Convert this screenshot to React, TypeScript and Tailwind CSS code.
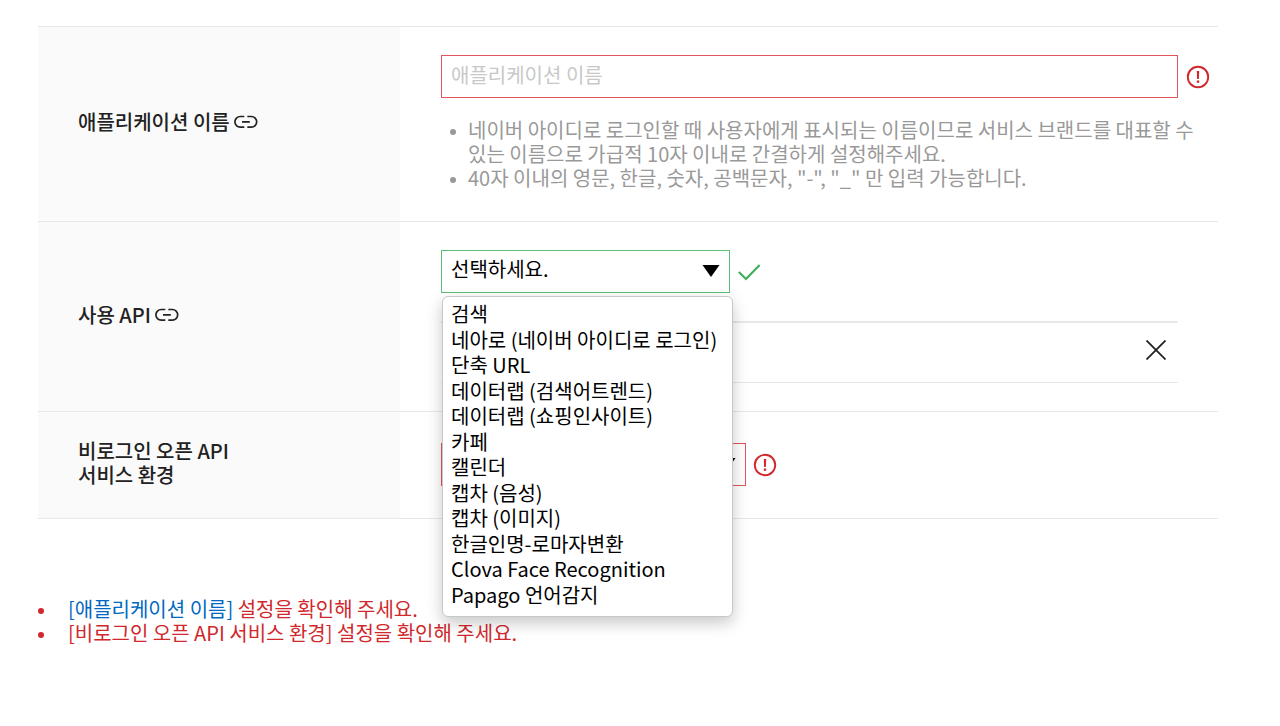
import type { ReactNode } from "react";

const apiOptions = [
  "검색",
  "네아로 (네이버 아이디로 로그인)",
  "단축 URL",
  "데이터랩 (검색어트렌드)",
  "데이터랩 (쇼핑인사이트)",
  "카페",
  "캘린더",
  "캡차 (음성)",
  "캡차 (이미지)",
  "한글인명-로마자변환",
  "Clova Face Recognition",
  "Papago 언어감지",
];

function LinkIcon() {
  return (
    <svg
      width="24"
      height="14"
      viewBox="0 0 24 14"
      fill="none"
      stroke="#222"
      strokeWidth="1.7"
      aria-hidden="true"
    >
      <path d="M10.3 1.5H6.2a5.3 5.3 0 0 0 0 10.6h4.1M13.3 1.5h4.1a5.3 5.3 0 0 1 0 10.6h-4.1M8 6.8h7.8" />
    </svg>
  );
}

function AlertIcon() {
  return (
    <svg width="24" height="24" viewBox="0 0 24 24" fill="none" className="shrink-0" aria-hidden="true">
      <circle cx="12" cy="12" r="10.2" stroke="#d0282c" strokeWidth="1.9" />
      <path d="M10.8 6h2.4l-.3 8h-1.8z" fill="#d0282c" />
      <rect x="10.8" y="15.5" width="2.4" height="2.3" fill="#d0282c" />
    </svg>
  );
}

function CheckIcon() {
  return (
    <svg width="24" height="24" viewBox="0 0 24 24" fill="none" className="shrink-0" aria-hidden="true">
      <path d="M0.8 12L8 19L21.6 5" stroke="#3fae5a" strokeWidth="2.2" />
    </svg>
  );
}

function ArrowIcon() {
  return (
    <svg
      width="18"
      height="12"
      viewBox="0 0 18 12"
      className="pointer-events-none absolute top-[15px] right-[10px]"
      aria-hidden="true"
    >
      <path d="M0.5 0h17L9 12z" fill="#000" />
    </svg>
  );
}

function FormRow({
  label,
  htmlFor,
  link,
  children,
}: {
  label: ReactNode;
  htmlFor: string;
  link?: boolean;
  children: ReactNode;
}) {
  return (
    <div className="flex border-b border-[#e8e8e8]">
      <div className="flex w-[362px] shrink-0 items-center gap-1 bg-[#fafafa] pb-1 pl-10 font-medium text-[#222]">
        <label htmlFor={htmlFor}>{label}</label>
        {link && (
          <a href="#guide" aria-label="가이드">
            <LinkIcon />
          </a>
        )}
      </div>
      <div className="min-w-0 flex-1 pt-7 pr-2 pl-[41px]">{children}</div>
    </div>
  );
}

export default function App() {
  return (
    <main className="bg-white pt-[26px] pr-[62px] pb-20 pl-[38px] font-['Noto_Sans_CJK_KR','Noto_Sans',sans-serif] text-xl leading-6 text-black">
      <form className="border-t border-[#e8e8e8]">
        <FormRow label="애플리케이션 이름" htmlFor="app-name" link>
          <div className="flex items-center gap-2">
            <input
              id="app-name"
              type="text"
              placeholder="애플리케이션 이름"
              className="h-[43px] min-w-0 flex-1 border border-[#e25558] px-[9px] pb-1 outline-none placeholder:text-[#c8c8c8]"
            />
            <AlertIcon />
          </div>
          <ul className="mt-5 mb-[31px] list-none text-[#999]">
            <li className="flex gap-3 pl-[9px]">
              <span className="mt-[11px] size-1.5 shrink-0 rounded-full bg-[#999]" />
              <span>
                네이버 아이디로 로그인할 때 사용자에게 표시되는 이름이므로 서비스 브랜드를 대표할 수
                <br />
                있는 이름으로 가급적 10자 이내로 간결하게 설정해주세요.
              </span>
            </li>
            <li className="flex gap-3 pl-[9px]">
              <span className="mt-[11px] size-1.5 shrink-0 rounded-full bg-[#999]" />
              <span>40자 이내의 영문, 한글, 숫자, 공백문자, "-", "_" 만 입력 가능합니다.</span>
            </li>
          </ul>
        </FormRow>

        <FormRow label="사용 API" htmlFor="use-api" link>
          <div className="flex items-center gap-2">
            <div className="relative w-[289px]">
              <select
                id="use-api"
                className="h-[43px] w-full appearance-none border border-[#5cbd75] bg-white px-[9px] pb-1.5 outline-none"
              >
                <option>선택하세요.</option>
              </select>
              <ArrowIcon />
              <ul
                role="listbox"
                aria-label="사용 API"
                className="absolute top-[46px] left-px z-10 flex h-[321px] w-[291px] flex-col rounded-md border border-[#c8c8c8] bg-white px-2 pt-[5px] pb-2 shadow-[0_6px_16px_rgba(0,0,0,0.22)]"
              >
                {apiOptions.map((name) => (
                  <li key={name} role="option" aria-selected={false} className="flex-1 whitespace-nowrap">
                    {name}
                  </li>
                ))}
              </ul>
            </div>
            <CheckIcon />
          </div>
          <div className="mt-7 mr-8 mb-7 flex h-[62px] items-center justify-end border-t-2 border-b border-[#e8e8e8] pr-3 pb-[5px]">
            <button type="button" aria-label="삭제">
              <svg width="20" height="20" viewBox="0 0 20 20" stroke="#222" strokeWidth="1.8" aria-hidden="true">
                <path d="M0.5 0.5l19 19M19.5 0.5l-19 19" />
              </svg>
            </button>
          </div>
        </FormRow>

        <FormRow
          label={
            <>
              비로그인 오픈 API
              <br />
              서비스 환경
            </>
          }
          htmlFor="service-env"
        >
          <div className="mt-[3px] mb-8 flex items-center gap-[7px]">
            <div className="relative w-[305px]">
              <select
                id="service-env"
                className="h-[43px] w-full appearance-none border border-[#e25558] bg-white px-[9px] pb-1.5 outline-none"
              >
                <option>환경 추가</option>
              </select>
              <ArrowIcon />
            </div>
            <AlertIcon />
          </div>
        </FormRow>
      </form>

      <ul className="mt-[78px] list-none text-[#d0282c]">
        <li className="flex gap-6">
          <span className="mt-[11px] size-1.5 shrink-0 rounded-full bg-[#d0282c]" />
          <span>
            <a href="#app-name" className="text-[#0068c3]">
              [애플리케이션 이름]
            </a>{" "}
            설정을 확인해 주세요.
          </span>
        </li>
        <li className="flex gap-6">
          <span className="mt-[11px] size-1.5 shrink-0 rounded-full bg-[#d0282c]" />
          <span>[비로그인 오픈 API 서비스 환경] 설정을 확인해 주세요.</span>
        </li>
      </ul>
    </main>
  );
}
